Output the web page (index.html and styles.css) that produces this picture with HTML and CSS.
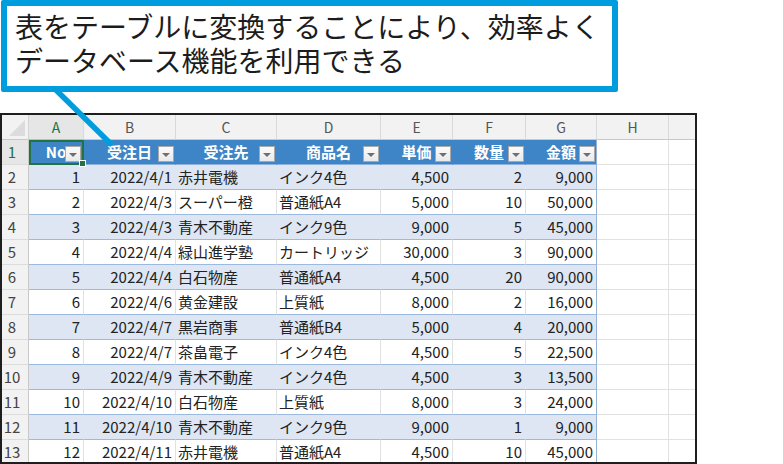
FILE: index.html
```html
<!DOCTYPE html>
<html lang="ja">
<head>
<meta charset="utf-8">
<title>テーブル</title>
<link rel="stylesheet" href="styles.css">
</head>
<body>
<div class="callout">
  <p class="callout-text">表をテーブルに変換することにより、効率よく<br>データベース機能を利用できる</p>
</div>
<svg class="tail" width="783" height="464" viewBox="0 0 783 464"><line x1="55" y1="89" x2="112" y2="145" stroke="#009dde" stroke-width="5.5"/></svg>
<div class="sheet">
  <div class="grid">
    <div class="corner"><span class="corner-tri"></span></div>
    <div class="ch ch-sel">A</div><div class="ch">B</div><div class="ch">C</div><div class="ch">D</div><div class="ch">E</div><div class="ch">F</div><div class="ch">G</div><div class="ch">H</div><div class="ch"></div>

    <div class="rh rh-sel">1</div>
    <div class="th sel">No<span class="fb"></span></div>
    <div class="th">受注日<span class="fb"></span></div>
    <div class="th">受注先<span class="fb"></span></div>
    <div class="th">商品名<span class="fb"></span></div>
    <div class="th">単価<span class="fb"></span></div>
    <div class="th">数量<span class="fb"></span></div>
    <div class="th th-last">金額<span class="fb"></span></div>
    <div class="e"></div><div class="e"></div>

    <div class="rh">2</div>
    <div class="c band r">1</div><div class="c band r">2022/4/1</div><div class="c band">赤井電機</div><div class="c band">インク4色</div><div class="c band r">4,500</div><div class="c band r">2</div><div class="c band r last">9,000</div><div class="e"></div><div class="e"></div>

    <div class="rh">3</div>
    <div class="c r">2</div><div class="c r">2022/4/3</div><div class="c">スーパー橙</div><div class="c">普通紙A4</div><div class="c r">5,000</div><div class="c r">10</div><div class="c r last">50,000</div><div class="e"></div><div class="e"></div>

    <div class="rh">4</div>
    <div class="c band r">3</div><div class="c band r">2022/4/3</div><div class="c band">青木不動産</div><div class="c band">インク9色</div><div class="c band r">9,000</div><div class="c band r">5</div><div class="c band r last">45,000</div><div class="e"></div><div class="e"></div>

    <div class="rh">5</div>
    <div class="c r">4</div><div class="c r">2022/4/4</div><div class="c">緑山進学塾</div><div class="c">カートリッジ</div><div class="c r">30,000</div><div class="c r">3</div><div class="c r last">90,000</div><div class="e"></div><div class="e"></div>

    <div class="rh">6</div>
    <div class="c band r">5</div><div class="c band r">2022/4/4</div><div class="c band">白石物産</div><div class="c band">普通紙A4</div><div class="c band r">4,500</div><div class="c band r">20</div><div class="c band r last">90,000</div><div class="e"></div><div class="e"></div>

    <div class="rh">7</div>
    <div class="c r">6</div><div class="c r">2022/4/6</div><div class="c">黄金建設</div><div class="c">上質紙</div><div class="c r">8,000</div><div class="c r">2</div><div class="c r last">16,000</div><div class="e"></div><div class="e"></div>

    <div class="rh">8</div>
    <div class="c band r">7</div><div class="c band r">2022/4/7</div><div class="c band">黒岩商事</div><div class="c band">普通紙B4</div><div class="c band r">5,000</div><div class="c band r">4</div><div class="c band r last">20,000</div><div class="e"></div><div class="e"></div>

    <div class="rh">9</div>
    <div class="c r">8</div><div class="c r">2022/4/7</div><div class="c">茶畠電子</div><div class="c">インク4色</div><div class="c r">4,500</div><div class="c r">5</div><div class="c r last">22,500</div><div class="e"></div><div class="e"></div>

    <div class="rh">10</div>
    <div class="c band r">9</div><div class="c band r">2022/4/9</div><div class="c band">青木不動産</div><div class="c band">インク4色</div><div class="c band r">4,500</div><div class="c band r">3</div><div class="c band r last">13,500</div><div class="e"></div><div class="e"></div>

    <div class="rh">11</div>
    <div class="c r">10</div><div class="c r">2022/4/10</div><div class="c">白石物産</div><div class="c">上質紙</div><div class="c r">8,000</div><div class="c r">3</div><div class="c r last">24,000</div><div class="e"></div><div class="e"></div>

    <div class="rh">12</div>
    <div class="c band r">11</div><div class="c band r">2022/4/10</div><div class="c band">青木不動産</div><div class="c band">インク9色</div><div class="c band r">9,000</div><div class="c band r">1</div><div class="c band r last">9,000</div><div class="e"></div><div class="e"></div>

    <div class="rh">13</div>
    <div class="c r">12</div><div class="c r">2022/4/11</div><div class="c">赤井電機</div><div class="c">普通紙A4</div><div class="c r">4,500</div><div class="c r">10</div><div class="c r last">45,000</div><div class="e"></div><div class="e"></div>
  </div>
</div>
</body>
</html>
```

FILE: styles.css
```css
html, body {
  margin: 0;
  padding: 0;
  background: #ffffff;
}
body {
  position: relative;
  width: 783px;
  height: 464px;
  overflow: hidden;
  font-family: "Noto Sans CJK JP", "Noto Sans", sans-serif;
  color: #222222;
}

.callout {
  margin-left: 1px;
  width: 617px;
  height: 92px;
  box-sizing: border-box;
  border: 6px solid #009dde;
  border-radius: 2px;
  padding: 3px 0 0 8px;
  background: #ffffff;
}
.callout-text {
  margin: 0;
  font-size: 28px;
  line-height: 34px;
  color: #1c1c1c;
  white-space: nowrap;
}

.tail {
  position: absolute;
  left: 0;
  top: 0;
  z-index: 5;
  pointer-events: none;
}

.sheet {
  margin-top: 21px;
  width: 697px;
  height: 351px;
  box-sizing: border-box;
  border: 2px solid #1e1e1e;
  overflow: hidden;
}

.grid {
  display: grid;
  grid-template-columns: 27px 55px 92px 101px 104px 72px 73px 71px 72px 40px;
  grid-auto-rows: 25px;
  font-size: 15px;
}
.grid > div {
  box-sizing: border-box;
  line-height: 24px;
  white-space: nowrap;
  overflow: hidden;
}

.corner {
  background: #f2f2f2;
  border-right: 1px solid #d4d4d4;
  border-bottom: 1px solid #c8c8c8;
  display: flex;
  justify-content: flex-end;
  align-items: flex-end;
  padding: 0 3px 3px 0;
}
.corner-tri {
  width: 0;
  height: 0;
  border-left: 16px solid transparent;
  border-bottom: 16px solid #dcdcdc;
}

.ch {
  background: #f2f2f2;
  border-right: 1px solid #d9d9d9;
  border-bottom: 1px solid #c8c8c8;
  text-align: center;
  font-size: 14px;
  color: #555555;
}
.ch-sel {
  background: #e6e6e6;
  color: #217346;
  border-bottom: 1px solid #bdbdbd;
}

.rh {
  background: #f2f2f2;
  border-right: 1px solid #c8c8c8;
  border-bottom: 1px solid #dcdcdc;
  text-align: center;
  padding-right: 6px;
  color: #444444;
}
.rh-sel {
  background: #e6e6e6;
  color: #217346;
}

.th {
  position: relative;
  background: #3d85c6;
  border-right: 1px solid #3d85c6;
  border-bottom: 1px solid #8fb0da;
  color: #ffffff;
  font-weight: 700;
  text-align: center;
}
.th-last {
  border-right: 1px solid #95b3d7;
}
.grid > .sel {
  overflow: visible;
  z-index: 2;
}
.sel::before {
  content: "";
  position: absolute;
  left: 0;
  top: 0;
  right: -1px;
  bottom: -1px;
  border: 2px solid #217346;
}
.sel::after {
  content: "";
  position: absolute;
  right: -3px;
  bottom: -3px;
  width: 5px;
  height: 5px;
  background: #217346;
  border: 1px solid #ffffff;
}

.fb {
  position: absolute;
  right: 1px;
  bottom: 2px;
  width: 16px;
  height: 16px;
  box-sizing: border-box;
  background: linear-gradient(#fbfbfb, #e9e9e9);
  border: 1px solid #a8a8a8;
  display: flex;
  align-items: center;
  justify-content: center;
}
.fb::after {
  content: "";
  width: 0;
  height: 0;
  margin-top: 2px;
  border-left: 4px solid transparent;
  border-right: 4px solid transparent;
  border-top: 4px solid #6f6f6f;
}
.sel .fb {
  right: 2px;
}

.c {
  background: #ffffff;
  border-right: 1px solid #e1e1e1;
  border-bottom: 1px solid #9cb9df;
  padding: 0 3px 0 2px;
  color: #222222;
}
.c.band {
  background: #dde6f2;
  border-right-color: #dde6f2;
}
.c.r {
  text-align: right;
}
.c.last {
  border-right: 1px solid #95b3d7;
}

.e {
  background: #ffffff;
  border-right: 1px solid #e1e1e1;
  border-bottom: 1px solid #e1e1e1;
}
```
